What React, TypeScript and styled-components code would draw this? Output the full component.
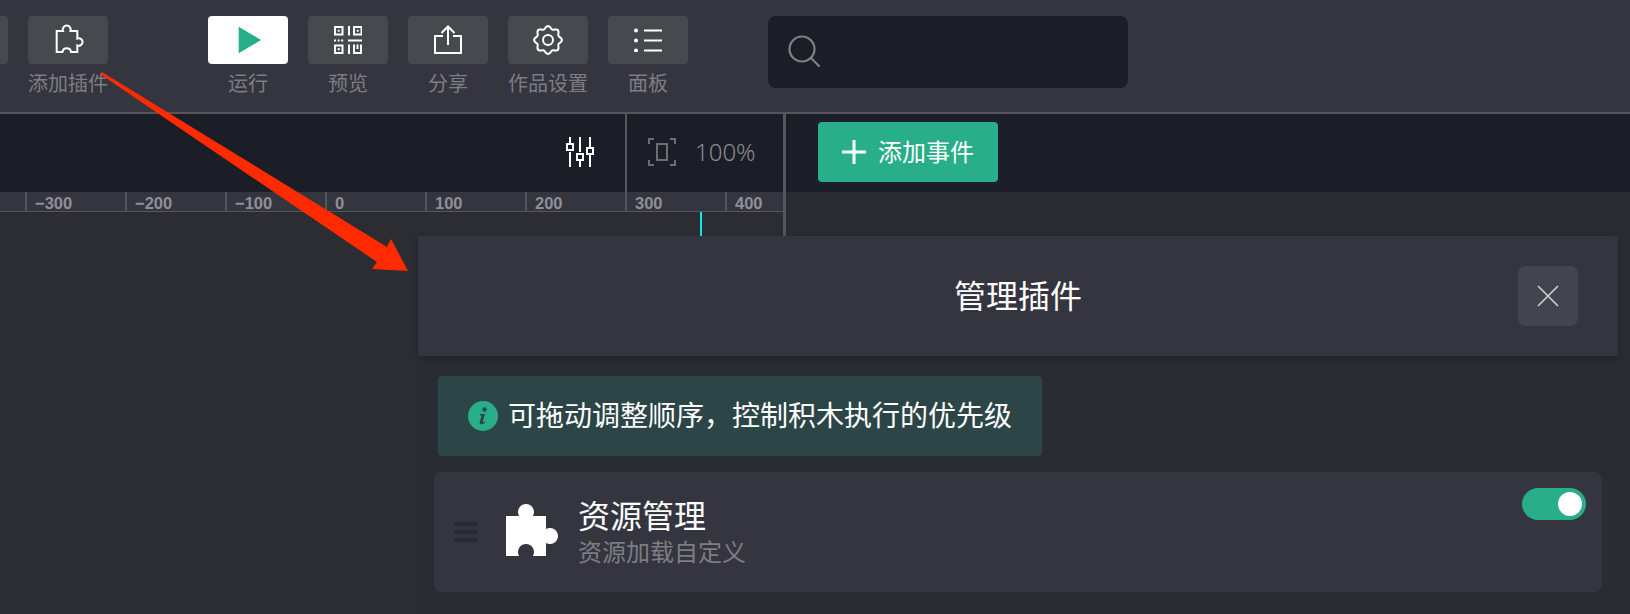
import React from "react";
import styled, { createGlobalStyle } from "styled-components";

const Global = createGlobalStyle`
  html, body { margin: 0; padding: 0; background: #2a2c33; }
  body { font-family: "Noto Sans CJK SC", "Noto Sans", sans-serif; width: 1630px; height: 614px; overflow: hidden; }
`;

const Page = styled.div`
  position: relative;
  width: 1630px;
  height: 614px;
  overflow: hidden;
  background: #2a2c33;
  display: flex;
  flex-direction: column;
`;

const Toolbar = styled.header`
  height: 114px;
  box-sizing: border-box;
  flex: none;
  background: #35353f;
  border-bottom: 2px solid #55555b;
  display: flex;
  align-items: flex-start;
  padding: 16px 0 0 0;
  margin-left: -72px;
`;

const ToolGroup = styled.div<{ $after: number }>`
  display: flex;
  gap: 20px;
  margin-right: ${(p) => p.$after}px;
`;

const Tool = styled.div`
  width: 80px;
  display: flex;
  flex-direction: column;
  align-items: center;
`;

const ToolButton = styled.div<{ $active?: boolean }>`
  width: 80px;
  height: 48px;
  border-radius: 4px;
  background: ${(p) => (p.$active ? "#ffffff" : "#48484f")};
  display: flex;
  align-items: center;
  justify-content: center;
`;

const ToolLabel = styled.span`
  margin-top: 5px;
  font-size: 20px;
  line-height: 28px;
  font-weight: 400;
  color: #7d7d83;
  white-space: nowrap;
`;

const Search = styled.div`
  width: 360px;
  height: 72px;
  box-sizing: border-box;
  border-radius: 8px;
  background: #1b1e26;
  padding-left: 20px;
  display: flex;
  align-items: center;
`;

const EditorBar = styled.div`
  height: 78px;
  flex: none;
  background: #1b1e26;
  display: flex;
`;

const EditorControls = styled.div`
  width: 783px;
  flex: none;
  display: flex;
  align-items: center;
  justify-content: flex-end;
  box-sizing: border-box;
`;

const TuneSlot = styled.div`
  width: 625px;
  padding: 0 31px 2px 0;
  box-sizing: border-box;
  display: flex;
  justify-content: flex-end;
  align-self: stretch;
  align-items: center;
`;

const ZoomSlot = styled.div`
  flex: 1;
  align-self: stretch;
  border-left: 2px solid #55555b;
  display: flex;
  align-items: center;
  padding: 0 0 2px 21px;
  gap: 19px;
`;

const ZoomText = styled.span`
  font-family: "Noto Sans", sans-serif;
  font-size: 24px;
  font-weight: 300;
  color: #8a8a90;
  margin-bottom: 2px;
`;

const VSplit = styled.div`
  width: 3px;
  flex: none;
  background: #55555b;
`;

const AddEvent = styled.button`
  margin: 8px 0 0 32px;
  width: 180px;
  height: 60px;
  border: 0;
  border-radius: 4px;
  background: #28ae88;
  color: #fff;
  font: 400 24px "Noto Sans CJK SC", sans-serif;
  display: flex;
  align-items: center;
  padding: 0 0 3px 24px;
  gap: 12px;
`;

const RulerRow = styled.div`
  flex: 1;
  display: flex;
`;

const RulerColumn = styled.div`
  width: 783px;
  flex: none;
  display: flex;
  flex-direction: column;
  background: #2c2d32;
`;

const Ruler = styled.div`
  height: 20px;
  box-sizing: border-box;
  background: #35353f;
  border-bottom: 1px solid #55555b;
  display: flex;
  padding-left: 25px;
`;

const Tick = styled.div`
  width: 100px;
  box-sizing: border-box;
  flex: none;
  border-left: 2px solid #55555b;
  padding: 3px 0 0 8px;
  font: 700 16.5px/16px "Liberation Sans", Arial, sans-serif;
  color: #8f8f96;
`;

const LastTick = styled(Tick)`
  width: 58px;
`;

const Guide = styled.div`
  width: 2px;
  height: 24px;
  background: #00f0f0;
  margin-left: 700px;
`;

const Panel = styled.aside`
  position: absolute;
  left: 418px;
  top: 236px;
  bottom: 0;
  width: 1200px;
  background: #2a2c33;
`;

const PanelHeader = styled.div`
  height: 120px;
  box-sizing: border-box;
  padding-bottom: 4px;
  background: #35353f;
  box-shadow: 0 2px 6px rgba(0, 0, 0, 0.25);
  display: flex;
  align-items: center;
  justify-content: center;
  position: relative;
`;

const PanelTitle = styled.h2`
  margin: 0;
  font-size: 32px;
  font-weight: 400;
  color: #fff;
  line-height: 1;
`;

const CloseButton = styled.div`
  position: absolute;
  left: 1100px;
  top: 30px;
  width: 60px;
  height: 60px;
  border-radius: 8px;
  background: #44444e;
  display: flex;
  align-items: center;
  justify-content: center;
`;

const Notice = styled.div`
  margin: 20px 0 0 20px;
  width: 604px;
  height: 80px;
  border-radius: 4px;
  background: #2c4648;
  display: flex;
  align-items: center;
  padding-left: 30px;
  box-sizing: border-box;
  gap: 10px;
`;

const NoticeText = styled.span`
  color: #fff;
  font-size: 28px;
  font-weight: 400;
  line-height: 40px;
  margin-bottom: 4px;
  white-space: nowrap;
`;

const Card = styled.div`
  margin: 16px 16px 0 16px;
  height: 120px;
  border-radius: 8px;
  background: #35353f;
  display: flex;
  align-items: center;
  padding-left: 20px;
  position: relative;
`;

const Grip = styled.div`
  width: 24px;
  display: flex;
  flex-direction: column;
  gap: 4px;
  margin-right: 28px;
`;

const GripBar = styled.span`
  display: block;
  height: 4px;
  border-radius: 2px;
  background: #292a31;
`;

const PluginIcon = styled.svg`
  margin-bottom: 4px;
`;

const CardText = styled.div`
  margin-left: 20px;
  padding-bottom: 6px;
  display: flex;
  flex-direction: column;
`;

const CardTitle = styled.div`
  font-size: 32px;
  line-height: 44px;
  font-weight: 400;
  color: #fff;
`;

const CardSub = styled.div`
  font-size: 24px;
  line-height: 30px;
  font-weight: 400;
  color: #7d7d83;
`;

const Toggle = styled.div`
  position: absolute;
  right: 16px;
  top: 16px;
  width: 64px;
  height: 32px;
  border-radius: 16px;
  background: #28ae88;
`;

const Knob = styled.span`
  position: absolute;
  left: 36px;
  top: 4px;
  width: 24px;
  height: 24px;
  border-radius: 50%;
  background: #fff;
`;

const ArrowOverlay = styled.svg`
  position: absolute;
  left: 0;
  top: 0;
  pointer-events: none;
`;

const PlusMark = styled.svg`
  margin-top: 3px;
`;

const gearPath = (() => {
  const pts: string[] = [];
  for (let i = 0; i < 240; i++) {
    const a = (i / 240) * Math.PI * 2;
    const r = 12.6 + 1.3 * Math.cos(8 * a);
    pts.push(`${(15 + r * Math.sin(a)).toFixed(2)} ${(15 - r * Math.cos(a)).toFixed(2)}`);
  }
  return `M${pts.join(" L")} Z`;
})();

const Icons = {
  Puzzle: () => (
    <svg width="32" height="32" viewBox="0 0 32 32" fill="none" stroke="#fff" strokeWidth="2">
      <path d="M4.7 7 H11 A4 4 0 1 1 18.5 7 H25.3 V14.5 A3.8 3.8 0 1 1 25.3 21.5 V28 H19 A4.3 4.3 0 0 0 10.5 28 H4.7 Z" />
    </svg>
  ),
  Play: () => (
    <svg width="28" height="28" viewBox="0 0 28 28">
      <path d="M4.7 0.7 L27 14 L4.7 27.3 Z" fill="#28ae88" />
    </svg>
  ),
  Qr: () => (
    <svg width="28" height="28" viewBox="0 0 28 28" fill="none" stroke="#fff" strokeWidth="2">
      <rect x="1" y="1" width="7.5" height="7.5" />
      <rect x="20" y="1" width="7.5" height="7.5" />
      <rect x="1" y="19.5" width="7.5" height="7.5" />
      <rect x="4" y="4" width="1.5" height="1.5" fill="#fff" strokeWidth="0.5" />
      <rect x="23" y="4" width="1.5" height="1.5" fill="#fff" strokeWidth="0.5" />
      <rect x="4" y="22.5" width="1.5" height="1.5" fill="#fff" strokeWidth="0.5" />
      <path d="M15 0 V9.5 M15 18.5 V28 M14 14.5 H28" />
      <path d="M0 14.5 H10" strokeDasharray="2 1.6" />
      <path d="M20 18.5 V27 H27 V18.5 M23.5 18.5 V23" />
    </svg>
  ),
  Share: () => (
    <svg width="28" height="30" viewBox="0 0 28 30" fill="none" stroke="#fff" strokeWidth="2">
      <path d="M9 11 H1 V28 H27 V11 H19" />
      <path d="M14 20 V1.5 M7.5 8 L14 1.5 L20.5 8" />
    </svg>
  ),
  Gear: () => (
    <svg width="30" height="30" viewBox="0 0 30 30" fill="none" stroke="#fff" strokeWidth="2">
      <circle cx="15" cy="15" r="5" />
      <path d={gearPath} />
    </svg>
  ),
  List: () => (
    <svg width="28" height="24" viewBox="0 0 28 24" fill="#fff">
      <circle cx="2" cy="2.5" r="2" />
      <circle cx="2" cy="12.5" r="2" />
      <circle cx="2" cy="22.5" r="2" />
      <rect x="10" y="1.5" width="18" height="2" />
      <rect x="10" y="11.5" width="18" height="2" />
      <rect x="10" y="21.5" width="18" height="2" />
    </svg>
  ),
  Search: () => (
    <svg width="34" height="34" viewBox="0 0 34 34" fill="none" stroke="#808084" strokeWidth="2.2">
      <circle cx="14" cy="14" r="12.5" />
      <path d="M23 23 L31 31" strokeLinecap="round" />
    </svg>
  ),
  Tune: () => (
    <svg width="28" height="30" viewBox="0 0 28 30" fill="none" stroke="#fff" strokeWidth="2">
      <path d="M4 0 V8 M4 15 V30 M14 0 V15 M14 22 V30 M24 0 V10 M24 17 V30" />
      <rect x="1" y="7" width="6" height="6" />
      <rect x="11" y="17" width="6" height="6" />
      <rect x="21" y="11" width="6" height="6" />
    </svg>
  ),
  Fit: () => (
    <svg width="28" height="28" viewBox="0 0 28 28" fill="none" stroke="#6e6e72" strokeWidth="2">
      <path d="M1 6 V1 H6 M22 1 H27 V6 M27 22 V27 H22 M6 27 H1 V22" />
      <rect x="9" y="6" width="10" height="16" />
    </svg>
  ),
  Plus: () => (
    <PlusMark width="24" height="24" viewBox="0 0 24 24" fill="#fff">
      <rect x="0" y="10.5" width="24" height="3" />
      <rect x="10.5" y="0" width="3" height="24" />
    </PlusMark>
  ),
  Close: () => (
    <svg width="22" height="22" viewBox="0 0 22 22" stroke="#d0d0d4" strokeWidth="1.6">
      <path d="M1 1 L21 21 M21 1 L1 21" />
    </svg>
  ),
  Info: () => (
    <svg width="30" height="30" viewBox="0 0 30 30">
      <circle cx="15" cy="15" r="15" fill="#28ae88" />
      <circle cx="16.5" cy="8.5" r="2.2" fill="#2c4648" />
      <path d="M12 13 H17 L14.8 20.5 C14.6 21.4 15.3 21.6 16.8 20.4 L17.3 21.2 C15.6 23 13.8 23.6 12.6 23.2 C11.6 22.8 11.5 21.8 11.8 20.8 L13.6 14.6 H11.8 Z" fill="#2c4648" />
    </svg>
  ),
  SolidPuzzle: () => (
    <PluginIcon width="52" height="52" viewBox="0 0 52 52" fill="#fff">
      <path d="M0 12 H13.07 A8 8 0 1 1 26.93 12 H40 V25.07 A8 8 0 1 1 40 38.93 V52 H26.93 A8 8 0 1 0 13.07 52 H0 Z" />
    </PluginIcon>
  ),
};

const tools = [{ label: "添加插件", icon: <Icons.Puzzle /> }];
const actions = [
  { label: "运行", icon: <Icons.Play />, active: true },
  { label: "预览", icon: <Icons.Qr /> },
  { label: "分享", icon: <Icons.Share /> },
  { label: "作品设置", icon: <Icons.Gear /> },
  { label: "面板", icon: <Icons.List /> },
];
const ticks = ["−300", "−200", "−100", "0", "100", "200", "300"];

export default function App() {
  return (
    <Page>
      <Global />
      <Toolbar>
        <ToolGroup $after={100}>
          <Tool>
            <ToolButton />
          </Tool>
          {tools.map((t) => (
            <Tool key={t.label}>
              <ToolButton>{t.icon}</ToolButton>
              <ToolLabel>{t.label}</ToolLabel>
            </Tool>
          ))}
        </ToolGroup>
        <ToolGroup $after={80}>
          {actions.map((t) => (
            <Tool key={t.label}>
              <ToolButton $active={t.active}>{t.icon}</ToolButton>
              <ToolLabel>{t.label}</ToolLabel>
            </Tool>
          ))}
        </ToolGroup>
        <Search>
          <Icons.Search />
        </Search>
      </Toolbar>
      <EditorBar>
        <EditorControls>
          <TuneSlot>
            <Icons.Tune />
          </TuneSlot>
          <ZoomSlot>
            <Icons.Fit />
            <ZoomText>100%</ZoomText>
          </ZoomSlot>
        </EditorControls>
        <VSplit />
        <AddEvent>
          <Icons.Plus />
          添加事件
        </AddEvent>
      </EditorBar>
      <RulerRow>
        <RulerColumn>
          <Ruler>
            {ticks.map((t) => (
              <Tick key={t}>{t}</Tick>
            ))}
            <LastTick>400</LastTick>
          </Ruler>
          <Guide />
        </RulerColumn>
        <VSplit />
      </RulerRow>
      <Panel>
        <PanelHeader>
          <PanelTitle>管理插件</PanelTitle>
          <CloseButton>
            <Icons.Close />
          </CloseButton>
        </PanelHeader>
        <Notice>
          <Icons.Info />
          <NoticeText>可拖动调整顺序，控制积木执行的优先级</NoticeText>
        </Notice>
        <Card>
          <Grip>
            <GripBar />
            <GripBar />
            <GripBar />
          </Grip>
          <Icons.SolidPuzzle />
          <CardText>
            <CardTitle>资源管理</CardTitle>
            <CardSub>资源加载自定义</CardSub>
          </CardText>
          <Toggle>
            <Knob />
          </Toggle>
        </Card>
      </Panel>
      <ArrowOverlay width="1630" height="614" viewBox="0 0 1630 614">
        <path d="M102 72 L387 247 L391 239 L408 271 L372 269 L377 262 L100 74 Z" fill="#ff2a00" />
      </ArrowOverlay>
    </Page>
  );
}
